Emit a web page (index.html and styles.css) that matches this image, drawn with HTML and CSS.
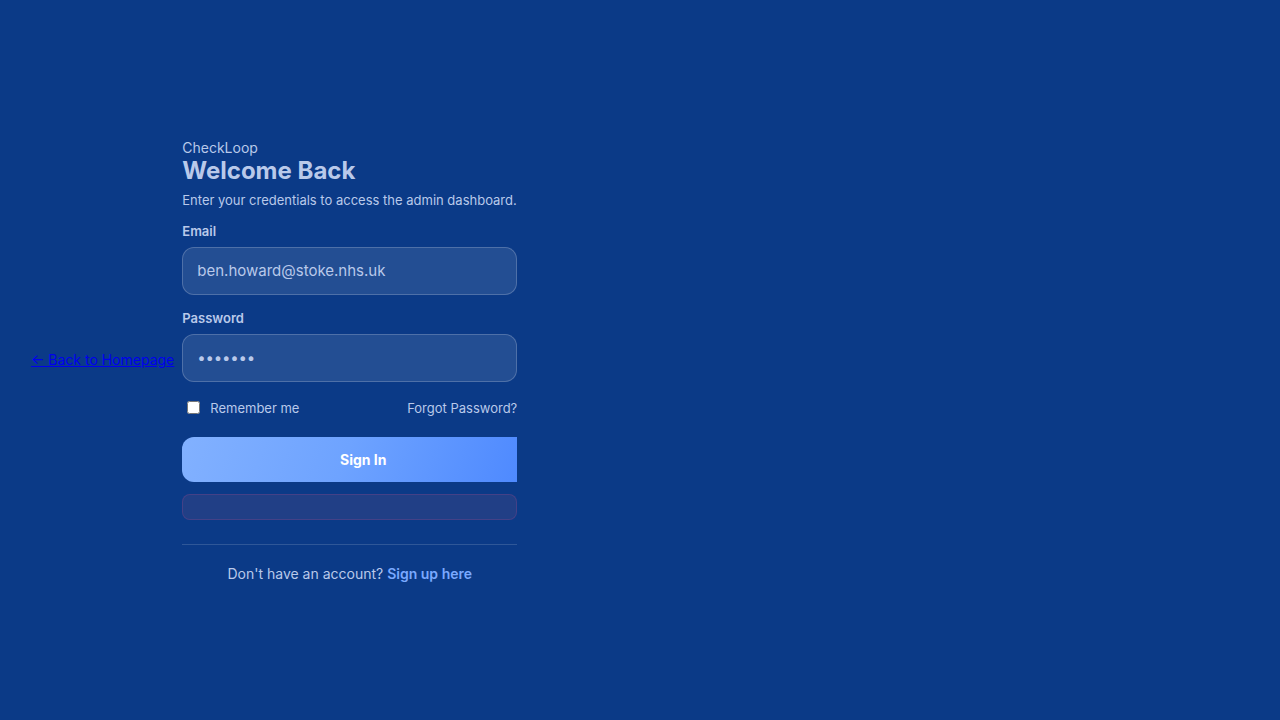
FILE: index.html
```html
<!DOCTYPE html>
<html lang="en">
<head>
<meta charset="utf-8">
<title>CheckLoop - Sign In</title>
<link rel="stylesheet" href="styles.css">
</head>
<body>
<div class="page">
  <a class="back" href="#">← Back to Homepage</a>
  <form class="card">
    <div class="brand">CheckLoop</div>
    <h1 class="title">Welcome Back</h1>
    <p class="subtitle">Enter your credentials to access the admin dashboard.</p>
    <label class="label" for="email">Email</label>
    <input class="input" id="email" type="email" value="ben.howard@stoke.nhs.uk">
    <label class="label label-pw" for="pw">Password</label>
    <input class="input input-pw" id="pw" type="password" value="1234567">
    <div class="row">
      <label class="remember"><input type="checkbox" class="check"> Remember me</label>
      <a class="forgot" href="#">Forgot Password?</a>
    </div>
    <div class="btn-wrap">
      <button class="btn" type="button">Sign In</button>
    </div>
    <div class="error"></div>
    <div class="divider"></div>
    <p class="footer">Don't have an account? <a class="signup" href="#">Sign up here</a></p>
  </form>
</div>
</body>
</html>
```
FILE: styles.css
```css
html, body {
  margin: 0;
  padding: 0;
}
body {
  background: #0b3a87;
  font-family: Inter, "Noto Sans", sans-serif;
  color: #b9c9ea;
}
.page {
  height: 720px;
  display: flex;
  align-items: center;
  padding-left: 31px;
  gap: 8px;
  box-sizing: border-box;
}
.back {
  color: #0000ee;
  font-size: 14px;
  text-decoration: underline;
  font-family: Inter, sans-serif;
  margin-top: -1px;
}
.card {
  width: 335px;
  display: flex;
  flex-direction: column;
}
.brand {
  font-size: 14px;
  line-height: 17px;
  color: #b9c9ea;
}
.title {
  margin: 0;
  font-size: 24px;
  line-height: 29px;
  font-weight: 700;
  color: #b9c9ea;
}
.subtitle {
  margin: 7px 0 0;
  font-size: 13px;
  line-height: 16px;
}
.label {
  margin-top: 15px;
  font-size: 13px;
  line-height: 16px;
  font-weight: 600;
}
.label-pw {
  margin-top: 15px;
}
.input {
  margin-top: 8px;
  height: 48px;
  box-sizing: border-box;
  border-radius: 12px;
  border: 1px solid rgba(255,255,255,0.2);
  background: rgba(255,255,255,0.1);
  color: #b9c9ea;
  font-family: Inter, sans-serif;
  font-size: 15px;
  padding: 0 14px;
  outline: none;
}
.input-pw {
  letter-spacing: -0.2px;
}
.row {
  margin-top: 18px;
  display: flex;
  justify-content: space-between;
  align-items: center;
  font-size: 13px;
  line-height: 16px;
}
.remember {
  display: flex;
  align-items: center;
  gap: 10px;
}
.check {
  margin: 0 0 0 5px;
  width: 13px;
  height: 13px;
}
.forgot {
  color: #b9c9ea;
  text-decoration: none;
}
.btn-wrap {
  margin-top: 21px;
  overflow: hidden;
  width: 335px;
}
.btn {
  display: block;
  width: 362px;
  height: 45px;
  border: none;
  border-radius: 12px;
  background: linear-gradient(110deg, #82b1ff 0%, #6ea3ff 45%, #4a86ff 100%);
  color: #ffffff;
  font-family: Inter, sans-serif;
  font-size: 14px;
  font-weight: 700;
}
.error {
  margin-top: 12px;
  height: 26px;
  box-sizing: border-box;
  border-radius: 8px;
  border: 1px solid rgba(150, 70, 140, 0.3);
  background: #213f86;
}
.divider {
  margin-top: 24px;
  height: 1px;
  background: rgba(255,255,255,0.15);
}
.footer {
  margin: 20px 0 0;
  text-align: center;
  font-size: 14px;
  line-height: 17px;
}
.signup {
  color: #7aa9ff;
  font-weight: 600;
  text-decoration: none;
}
```
